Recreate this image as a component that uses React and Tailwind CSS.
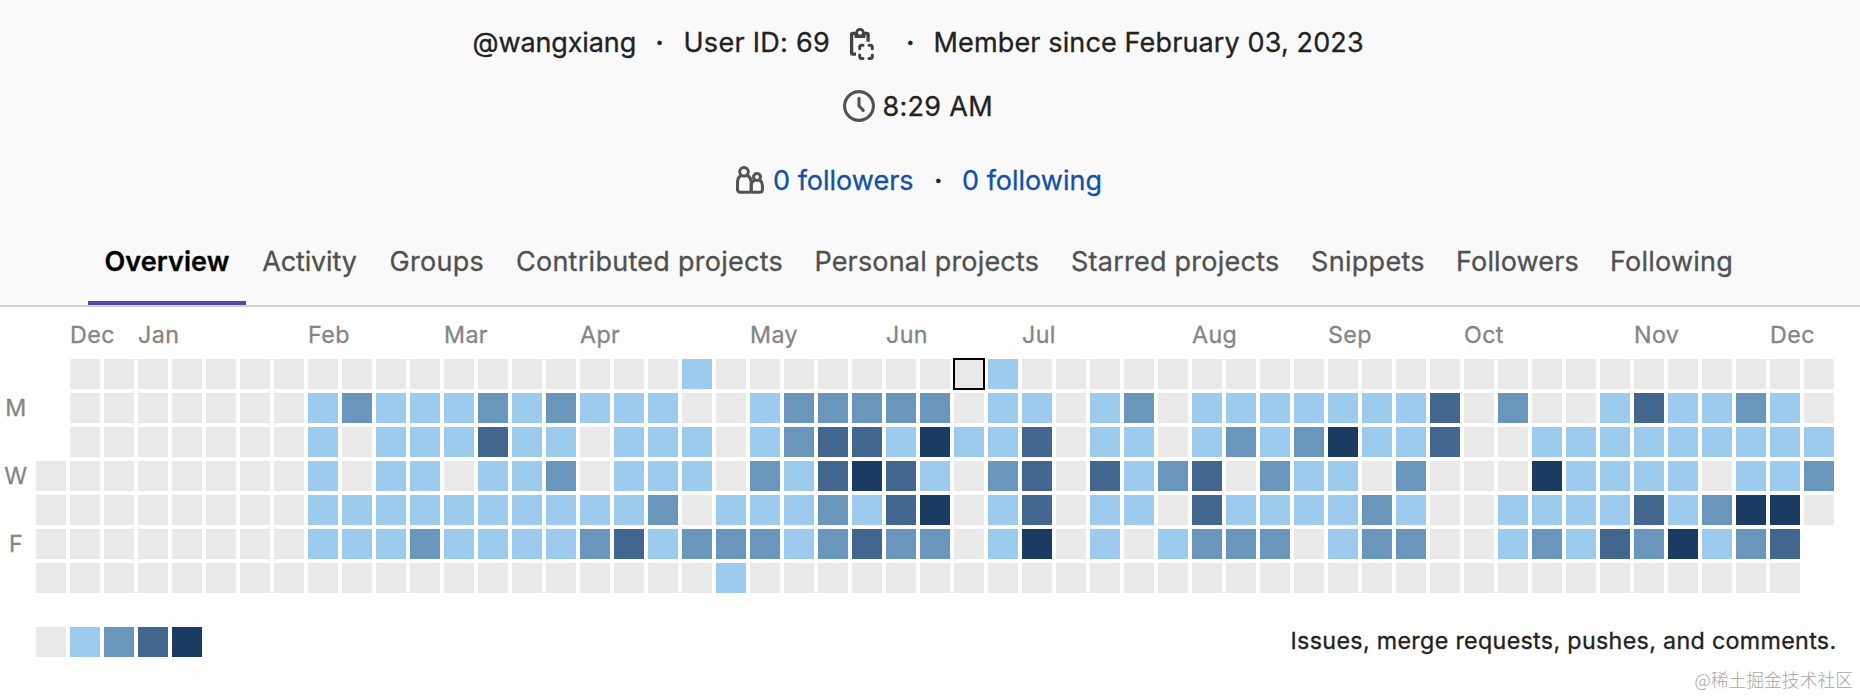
const LEVELS = {
  0: 'bg-[#e9e9e9]',
  1: 'bg-[#9ccbee]',
  2: 'bg-[#6b96bb]',
  3: 'bg-[#42668e]',
  4: 'bg-[#1c3b62]',
  '-': 'bg-transparent',
};

// One string per weekday (Sunday first), one character per week.
const DAYS = [
  { label: '', data: '-0000000' + '000000' + '00000100000000' + '10000000000000' + '00000000000' },
  { label: 'M', data: '-0000000' + '121112' + '12111001222220' + '11012011111113' + '02001311210' },
  { label: '', data: '-0000000' + '101113' + '11011101233141' + '13011012124113' + '00111111111' },
  { label: 'W', data: '00000000' + '101101' + '12011102134310' + '23031230211020' + '00411110112' },
  { label: '', data: '00000000' + '111111' + '11112011121340' + '13011031111210' + '01111312440' },
  { label: 'F', data: '00000000' + '111211' + '11231222123220' + '14010122201220' + '0121324123-' },
  { label: '', data: '00000000' + '000000' + '00000010000000' + '00000000000000' + '0000000000-' },
];

const SELECTED = { day: 0, week: 27 };

const MONTHS = {
  1: 'Dec', 3: 'Jan', 8: 'Feb', 12: 'Mar', 16: 'Apr', 21: 'May', 25: 'Jun',
  29: 'Jul', 34: 'Aug', 38: 'Sep', 42: 'Oct', 47: 'Nov', 51: 'Dec',
};

const TABS = [
  { name: 'Overview', style: 'w-[158px] tracking-[0.08px]' },
  { name: 'Activity', style: 'w-[127px] tracking-[-0.15px]' },
  { name: 'Groups', style: 'w-[127.5px] tracking-[0.3px]' },
  { name: 'Contributed projects', style: 'w-[298px] tracking-[0.27px]' },
  { name: 'Personal projects', style: 'w-[256.5px] tracking-[0.18px]' },
  { name: 'Starred projects', style: 'w-[240.5px] tracking-[0.24px]' },
  { name: 'Snippets', style: 'w-[145px] tracking-[0.3px]' },
  { name: 'Followers', style: 'w-[154px] tracking-[0.13px]' },
  { name: 'Following', style: 'w-[154px] tracking-[0.22px]' },
];

function ClipboardIcon() {
  return (
    <svg className="mt-[5px] h-[34px] w-8 shrink-0" viewBox="0 0 32 34" fill="none" stroke="#434343" strokeWidth="3.3">
      <path d="M10 5.4H6.7a1.1 1.1 0 0 0-1.1 1.1V25a1.1 1.1 0 0 0 1.1 1.1H10" />
      <path d="M18 5.4h3a1.1 1.1 0 0 1 1.1 1.1v7.3" />
      <path
        fill="#434343"
        stroke="none"
        fillRule="evenodd"
        d="M14 0a4.7 4.7 0 0 1 4.6 4h.1a.8.8 0 0 1 .8.8V9a.9.9 0 0 1-.9.9H9.4a.9.9 0 0 1-.9-.9V4.8a.8.8 0 0 1 .8-.8h.1A4.7 4.7 0 0 1 14 0zm0 2.8a2 2 0 1 0 0 4 2 2 0 0 0 0-4z"
      />
      <g strokeLinecap="round" strokeWidth="3">
        <path d="M13.7 20.8v-1.5a2 2 0 0 1 2-2H17" />
        <path d="M23 17.3h1.3a2 2 0 0 1 2 2v1.5" />
        <path d="M26.3 27v1.4a2 2 0 0 1-2 2H23" />
        <path d="M17 30.4h-1.3a2 2 0 0 1-2-2V27" />
      </g>
    </svg>
  );
}

function ClockIcon() {
  return (
    <svg className="size-8 shrink-0" viewBox="0 0 32 32" fill="none" stroke="#535353" strokeWidth="3.1" strokeLinecap="round">
      <circle cx="16" cy="16" r="14.4" />
      <path d="M16 8.3V16l4.3 4.4" strokeLinejoin="round" />
    </svg>
  );
}

function UsersIcon() {
  return (
    <svg className="size-8 shrink-0" viewBox="0 0 32 32" fill="none" stroke="#535353" strokeWidth="3" strokeLinejoin="round">
      <circle cx="10" cy="7.8" r="4.3" />
      <path d="M6.6 11.6C4.5 13.2 3.5 15.4 3.5 18v7.7a2.6 2.6 0 0 0 2.6 2.6h9.4a1.7 1.7 0 0 0 1.7-1.7V18c0-2.6-1.3-4.8-3.7-6.4" />
      <circle cx="23" cy="13" r="3.5" />
      <path d="M20.3 16.4c-2.1 1.1-3.1 2.7-3.1 5v5.2a1.7 1.7 0 0 0 1.7 1.7h7a2.5 2.5 0 0 0 2.5-2.5v-4.4c0-2.3-.7-3.9-2.7-5" />
    </svg>
  );
}

function Dot({ className }) {
  return <span className={'shrink-0 pt-0.5 text-center font-semibold ' + className}>·</span>;
}

export default function App() {
  return (
    <div className="relative h-[696px] w-[1860px] overflow-hidden bg-[#fefefe] font-['Inter','Noto_Sans_CJK_SC',sans-serif] whitespace-nowrap text-[#222] [-webkit-text-stroke:0.3px]">
      <header className="flex h-[307px] flex-col border-b-2 border-[#d2d2d2] bg-[#f9f9f9] text-[27px] leading-[40px]">
        <div className="flex h-[84px] items-center pl-[472.5px]">
          <span className="w-[163px] pt-0.5 tracking-[-0.12px]">@wangxiang</span>
          <Dot className="w-12" />
          <span className="w-[162.5px] pt-0.5 tracking-[0.28px]">User ID: 69</span>
          <span className="w-[41px]">
            <ClipboardIcon />
          </span>
          <Dot className="w-[46.6px]" />
          <span className="pt-0.5 tracking-[0.13px]">Member since February 03, 2023</span>
        </div>
        <div className="flex h-11 items-center gap-[7.5px] pl-[843px]">
          <ClockIcon />
          <span className="pt-0.5 tracking-[0.3px]">8:29 AM</span>
        </div>
        <div className="flex h-[104px] items-center pl-[734px] text-[#1450a8]">
          <UsersIcon />
          <a className="ml-[7px] w-[141.5px] pt-0.5">0 followers</a>
          <Dot className="w-[47.5px] text-[#222]" />
          <a className="pt-0.5">0 following</a>
        </div>
        <nav className="flex h-[73px] pl-[88px] leading-[59px] text-[#505050]">
          {TABS.map((tab, i) => (
            <a
              key={tab.name}
              className={
                'text-center ' + tab.style + (i === 0 ? ' border-b-4 border-[#504ba6] font-semibold text-black' : '')
              }
            >
              {tab.name}
            </a>
          ))}
        </nav>
      </header>

      <section className="text-[23.25px] leading-[31px] tracking-[0.4px] text-[#858585]">
        <div className="flex h-[52px] gap-1 pt-[12px] pl-9">
          {Array.from(DAYS[0].data, (_, week) => (
            <span key={week} className="w-[30px] shrink-0">
              {MONTHS[week]}
            </span>
          ))}
        </div>
        <div className="flex flex-col gap-1">
          {DAYS.map((day, d) => (
            <div key={d} className="flex h-[30px] gap-1">
              <span className="-mt-px w-8 shrink-0 text-center">{day.label}</span>
              {Array.from(day.data, (level, week) => (
                <span
                  key={week}
                  className={
                    'size-[30px] shrink-0 ' +
                    LEVELS[level] +
                    (d === SELECTED.day && week === SELECTED.week
                      ? ' outline-2 -outline-offset-1 outline-black'
                      : '')
                  }
                />
              ))}
            </div>
          ))}
        </div>
      </section>

      <footer className="mt-[34px] flex justify-between pr-[23.5px] pl-9">
        <div className="flex gap-1">
          {[0, 1, 2, 3, 4].map((level) => (
            <span key={level} className={'size-[30px] ' + LEVELS[level]} />
          ))}
        </div>
        <p className="-mt-px h-[30px] text-[23.25px] leading-[30px] tracking-[0.33px]">
          Issues, merge requests, pushes, and comments.
        </p>
      </footer>

      <span className="absolute right-[7px] bottom-[4px] font-['Noto_Sans_CJK_SC',sans-serif] text-[17.8px] leading-[26px] font-light text-[#a6a6a6] [-webkit-text-stroke:0]">
        @稀土掘金技术社区
      </span>
    </div>
  );
}
